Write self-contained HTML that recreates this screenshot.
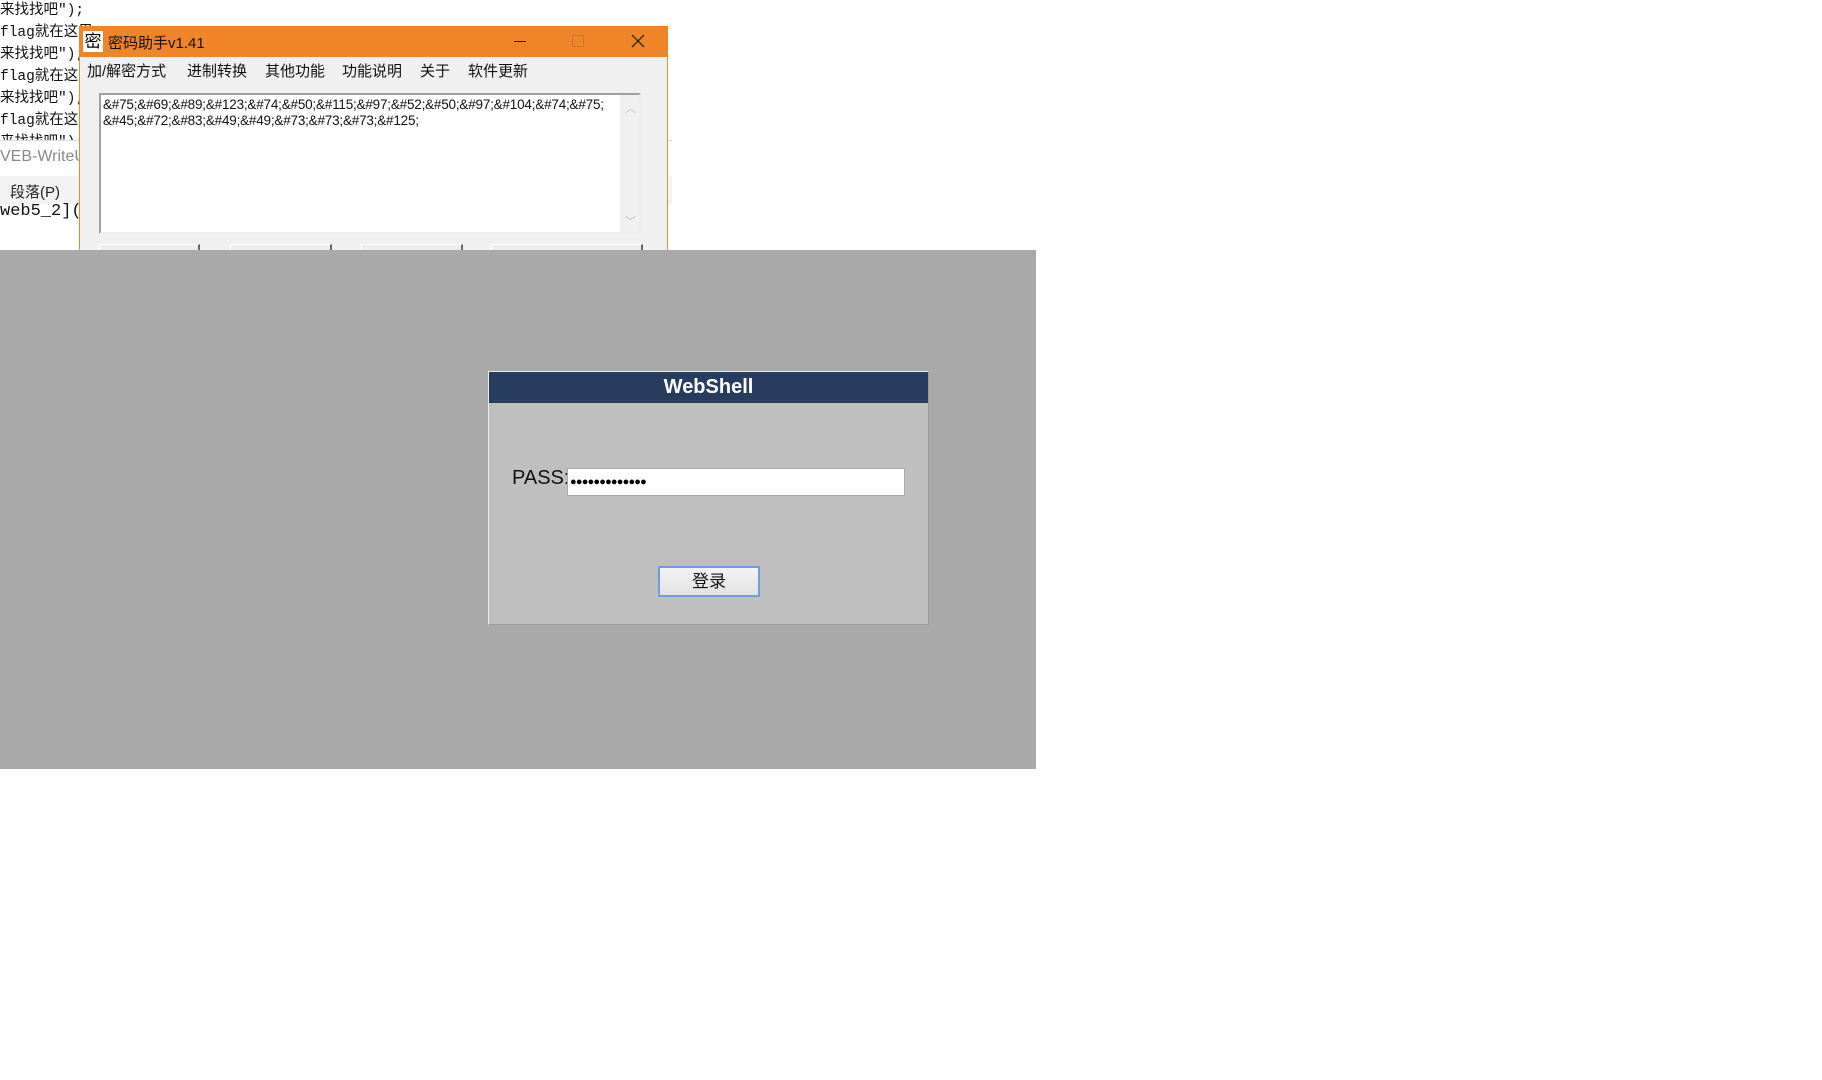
<!DOCTYPE html>
<html><head><meta charset="utf-8"><style>
*{margin:0;padding:0;box-sizing:border-box}
body{width:1822px;height:1080px;background:#fff;position:relative;overflow:hidden;font-family:"Liberation Sans","Noto Sans CJK SC",sans-serif}
.a{position:absolute}
.code{font-family:"Liberation Mono","Noto Sans CJK SC",monospace;font-size:14.5px;color:#111;left:0;line-height:22px;white-space:pre}
.m{position:absolute;top:60px;font-size:15px;color:#111}
</style></head><body>
<div class="a code" style="top:0">来找找吧");
flag就在这里
来找找吧");
flag就在这里
来找找吧");
flag就在这里
来找找吧");</div>
<div class="a" style="left:0;top:140px;width:672px;height:40px;background:#fff"></div>
<div class="a" style="left:0;top:140px;width:672px;height:1px;background:#ddd"></div>
<div class="a" style="left:0;top:148px;font-size:16px;color:#888">VEB-WriteU</div>
<div class="a" style="left:0;top:176px;width:672px;height:28px;background:#f3f3f3"></div>
<div class="a" style="left:10px;top:181px;font-size:15px;color:#222">段落(P)</div>
<div class="a code" style="top:201px;font-size:17px">web5_2](</div>

<div class="a" style="left:79px;top:26px;width:589px;height:226px;background:#f0f0f0;border:1px solid #e98a2c;border-bottom:none"></div>
<div class="a" style="left:79px;top:26px;width:589px;height:31px;background:#ef8429"></div>
<div class="a" style="left:83px;top:31px;width:20px;height:21px;background:#fff;font-size:17px;line-height:21px;text-align:center;color:#000">密</div>
<div class="a" style="left:108px;top:32px;font-size:15px;color:#111">密码助手v1.41</div>
<div class="a" style="left:514px;top:41px;width:12px;height:1px;background:#222"></div>
<div class="a" style="left:572px;top:35px;width:12px;height:12px;border:1px solid #c8733a"></div>
<svg class="a" style="left:631px;top:34px" width="14" height="14"><path d="M1 1L13 13M13 1L1 13" stroke="#222" stroke-width="1.3"/></svg>
<div class="m" style="left:87px">加/解密方式</div>
<div class="m" style="left:187px">进制转换</div>
<div class="m" style="left:265px">其他功能</div>
<div class="m" style="left:342px">功能说明</div>
<div class="m" style="left:420px">关于</div>
<div class="m" style="left:468px">软件更新</div>
<div class="a" style="left:99px;top:93px;width:542px;height:141px;background:#fff;border:2px solid #a0a0a0;border-right-color:#eee;border-bottom-color:#eee"></div>
<div class="a" style="left:620px;top:95px;width:19px;height:137px;background:#f0f0f0"></div>
<div class="a" style="left:625px;top:100px;font-size:11px;color:#bbb">︿</div>
<div class="a" style="left:625px;top:213px;font-size:11px;color:#bbb">﹀</div>
<div class="a" style="left:103px;top:97px;font-size:13.5px;line-height:16px;color:#111;letter-spacing:-0.2px">&amp;#75;&amp;#69;&amp;#89;&amp;#123;&amp;#74;&amp;#50;&amp;#115;&amp;#97;&amp;#52;&amp;#50;&amp;#97;&amp;#104;&amp;#74;&amp;#75;<br>&amp;#45;&amp;#72;&amp;#83;&amp;#49;&amp;#49;&amp;#73;&amp;#73;&amp;#73;&amp;#125;</div>
<div class="a" style="left:99px;top:244px;width:101px;height:10px;border:1px solid #fff;border-right:2px solid #666;background:#eee"></div>
<div class="a" style="left:230px;top:244px;width:102px;height:10px;border:1px solid #fff;border-right:2px solid #666;background:#eee"></div>
<div class="a" style="left:361px;top:244px;width:102px;height:10px;border:1px solid #fff;border-right:2px solid #666;background:#eee"></div>
<div class="a" style="left:491px;top:244px;width:152px;height:10px;border:1px solid #fff;border-right:2px solid #666;background:#eee"></div>

<div class="a" style="left:0;top:250px;width:1036px;height:519px;background:#a9a9a9"></div>
<div class="a" style="left:488px;top:371px;width:441px;height:254px;background:#bfbfbf;border:1px solid #ececec;border-right-color:#999;border-bottom-color:#999"></div>
<div class="a" style="left:489px;top:372px;width:439px;height:31px;background:#273d5f;color:#fff;font-weight:bold;font-size:20px;line-height:31px;text-align:center">WebShell</div>
<div class="a" style="left:512px;top:467px;font-size:20px;color:#111">PASS:</div>
<div class="a" style="left:567px;top:468px;width:338px;height:28px;background:#fff;border:1px solid #aaa;font-size:11px;line-height:26px;padding-left:2px;letter-spacing:-0.8px">●●●●●●●●●●●●●</div>
<div class="a" style="left:658px;top:566px;width:102px;height:31px;background:linear-gradient(#f3f3f3,#e2e2e2);border:2px solid #6e9ce0;font-size:17px;line-height:27px;text-align:center;color:#111">登录</div>
</body></html>
